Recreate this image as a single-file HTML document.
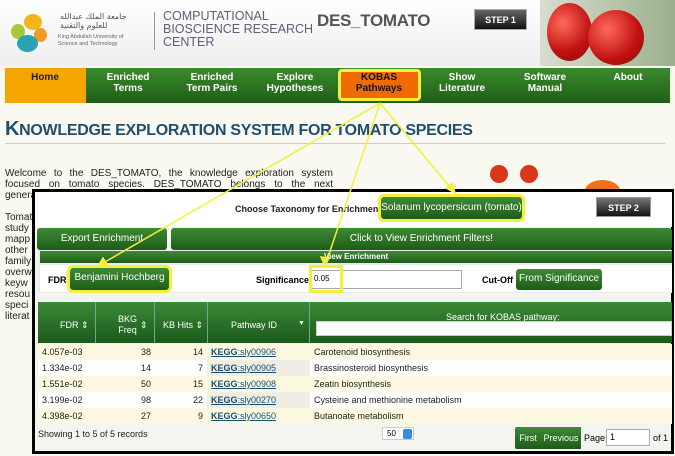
<!DOCTYPE html>
<html><head><meta charset="utf-8"><style>
*{box-sizing:border-box;margin:0;padding:0}
body{width:675px;height:456px;overflow:hidden;background:#f9f9f1;font-family:"Liberation Sans",Arial,sans-serif;position:relative}
.a{position:absolute}
.nav{left:5px;top:68px;width:665px;height:35px;background:linear-gradient(#3b8a2c,#1f5e17)}
.ni{position:absolute;top:4px;color:#fff;font-weight:bold;font-size:10px;text-align:center;line-height:11px;width:80px}
.g{background:linear-gradient(#3f8a35,#1d5c18);color:#fff;border-radius:3px;font-size:10px;text-align:center}
.tb td{font-size:9px;height:16px;padding:0 4px;color:#222}
.y{outline:3px solid #f2f03a}
</style></head><body>
<div class="a" style="left:0;top:0;width:675px;height:66px;background:linear-gradient(#fff,#eeeeee)"></div>
<div class="a" style="left:24px;top:14px;width:18px;height:16px;border-radius:50%;background:#f2b51c"></div>
<div class="a" style="left:11px;top:24px;width:14px;height:15px;border-radius:50%;background:#a8c73a"></div>
<div class="a" style="left:34px;top:28px;width:13px;height:14px;border-radius:50%;background:#f39a27"></div>
<div class="a" style="left:17px;top:35px;width:21px;height:17px;border-radius:50%;background:#2aa4b5"></div>
<div class="a" style="left:60px;top:12px;font-size:8px;color:#555;font-family:'DejaVu Sans',sans-serif;line-height:9px">جامعة الملك عبدالله<br>للعلوم والتقنية</div>
<div class="a" style="left:58px;top:34px;font-size:5.5px;color:#666;line-height:7px">King Abdullah University of<br>Science and Technology</div>
<div class="a" style="left:154px;top:12px;width:1px;height:38px;background:#999"></div>
<div class="a" style="left:163px;top:10px;font-size:12.5px;color:#5c6078;line-height:13px">COMPUTATIONAL<br>BIOSCIENCE RESEARCH<br>CENTER</div>
<div class="a" style="left:317px;top:11px;font-size:17px;font-weight:bold;color:#555;letter-spacing:-0.3px">DES_TOMATO</div>
<div class="a" style="left:474px;top:9px;width:53px;height:21px;background:linear-gradient(#666,#111);color:#fff;font-size:9px;font-weight:bold;text-align:center;line-height:21px;border:1px solid #aaa">STEP 1</div>
<div class="a" style="left:540px;top:0;width:135px;height:66px;background:linear-gradient(90deg,#d9ddd0,#9bb08c)"></div>
<div class="a" style="left:547px;top:3px;width:45px;height:58px;border-radius:50%;background:radial-gradient(circle at 35% 35%,#ff6a5a,#c01010 60%,#801010)"></div>
<div class="a" style="left:588px;top:10px;width:56px;height:55px;border-radius:50%;background:radial-gradient(circle at 35% 35%,#ff6a5a,#c01010 60%,#801010)"></div>
<div class="a nav">
<div class="a" style="left:0;top:0;width:81px;height:35px;background:#f6a400"></div>
<div class="ni" style="left:0;color:#222">Home</div>
<div class="ni" style="left:83px">Enriched<br>Terms</div>
<div class="ni" style="left:167px">Enriched<br>Term Pairs</div>
<div class="ni" style="left:250px">Explore<br>Hypotheses</div>
<div class="a" style="left:333px;top:1px;width:83px;height:32px;background:#f06a00;border:3px solid #f2f03a;border-radius:4px"></div>
<div class="ni" style="left:334px;color:#111">KOBAS<br>Pathways</div>
<div class="ni" style="left:417px">Show<br>Literature</div>
<div class="ni" style="left:500px">Software<br>Manual</div>
<div class="ni" style="left:583px">About</div>
</div>
<div class="a" style="left:5px;top:118px;font-size:20px;font-weight:bold;color:#1f4e6e;letter-spacing:-0.3px">K<span style="font-size:16px">NOWLEDGE EXPLORATION SYSTEM FOR TOMATO SPECIES</span></div>
<div class="a" style="left:5px;top:143px;width:660px;height:1px;background:#ccc"></div>
<div class="a" style="left:5px;top:168px;width:328px;font-size:10px;line-height:11px;color:#222;text-align:justify">Welcome to the DES_TOMATO, the knowledge exploration system focused on tomato species. DES_TOMATO belongs to the next generation<br><br>Tomato<br>study<br>mapp<br>other<br>family<br>overw<br>keyw<br>resou<br>speci<br>literat</div>
<div class="a" style="left:490px;top:165px;width:18px;height:18px;border-radius:50%;background:#d83818"></div>
<div class="a" style="left:520px;top:165px;width:18px;height:18px;border-radius:50%;background:#d83818"></div>
<div class="a" style="left:585px;top:180px;width:35px;height:22px;border-radius:50%;background:#f07020"></div>
<div class="a" style="left:32px;top:189px;width:642px;height:265px;border:3px solid #000;background:#f4f4f0"></div>
<div class="a" style="left:35px;top:192px;width:637px;height:35px;background:#fff"></div>
<div class="a" style="left:235px;top:204px;font-size:9px;font-weight:bold;color:#222">Choose Taxonomy for Enrichment:</div>
<div class="a g y" style="left:381px;top:197px;width:141px;height:22px;line-height:22px">Solanum lycopersicum (tomato)</div>
<div class="a" style="left:596px;top:197px;width:55px;height:20px;background:linear-gradient(#777,#111);color:#fff;font-size:9px;font-weight:bold;text-align:center;line-height:20px;border:1px solid #999">STEP 2</div>
<div class="a g" style="left:37px;top:228px;width:130px;height:22px;line-height:22px">Export Enrichment</div>
<div class="a g" style="left:171px;top:228px;width:501px;height:22px;line-height:22px">Click to View Enrichment Filters!</div>
<div class="a" style="left:38px;top:250px;width:634px;height:43px;background:#e8ecf0"></div>
<div class="a" style="left:40px;top:251px;width:632px;height:12px;background:linear-gradient(#3f8a35,#1d5c18);color:#fff;font-size:8px;font-weight:bold;text-align:center;line-height:12px">View Enrichment</div>
<div class="a" style="left:40px;top:265px;width:632px;height:27px;background:#fff"></div>
<div class="a" style="left:48px;top:275px;font-size:9px;font-weight:bold">FDR</div>
<div class="a g y" style="left:70px;top:268px;width:99px;height:22px;line-height:20px">Benjamini Hochberg</div>
<div class="a" style="left:256px;top:275px;font-size:9px;font-weight:bold">Significance</div>
<div class="a" style="left:310px;top:270px;width:152px;height:19px;border:1px solid #aaa;background:#fff"></div>
<div class="a y" style="left:312px;top:268px;width:28px;height:22px;font-size:8px;line-height:22px;padding-left:2px">0.05</div>
<div class="a" style="left:482px;top:275px;font-size:9px;font-weight:bold">Cut-Off</div>
<div class="a g" style="left:516px;top:269px;width:86px;height:21px;line-height:20px">From Significance</div>
<div class="a" style="left:38px;top:302px;width:634px;height:41px;background:linear-gradient(#3d8a37,#1a5a1a)"></div>
<div class="a" style="left:38px;top:302px;width:634px;height:41px;color:#fff;font-size:9px">
<span class="a" style="left:22px;top:18px">FDR ⇕</span>
<span class="a" style="left:57px;width:60px;height:41px;border-left:1px solid #6a9;border-right:1px solid #6a9;top:0"></span>
<span class="a" style="left:80px;top:12px;text-align:center;line-height:11px">BKG<br>Freq</span><span class="a" style="left:102px;top:18px">⇕</span>
<span class="a" style="left:125px;top:18px">KB Hits ⇕</span>
<span class="a" style="left:169px;width:103px;height:41px;border-left:1px solid #6a9;border-right:1px solid #6a9;top:0"></span>
<span class="a" style="left:193px;top:18px">Pathway ID</span><span class="a" style="left:260px;top:18px;font-size:7px">▼</span>
<span class="a" style="left:408px;top:10px">Search for KOBAS pathway:</span>
</div>
<div class="a" style="left:316px;top:321px;width:356px;height:15px;background:#fff;border:1px solid #ccc"></div>
<table class="a tb" style="left:38px;top:344px;width:634px;border-collapse:collapse">
<tr style="background:#fbf9e0"><td style="width:57px">4.057e-03</td><td style="width:60px;text-align:right">38</td><td style="width:52px;text-align:right">14</td><td style="width:103px"><u style="color:#1e4e6e;font-weight:bold">KEGG</u><u style="color:#1e4e6e">:sly00906</u></td><td>Carotenoid biosynthesis</td></tr>
<tr style="background:#fff"><td>1.334e-02</td><td style="text-align:right">14</td><td style="text-align:right">7</td><td style="background:#eeeee4"><u style="color:#1e4e6e;font-weight:bold">KEGG</u><u style="color:#1e4e6e">:sly00905</u></td><td>Brassinosteroid biosynthesis</td></tr>
<tr style="background:#fbf9e0"><td>1.551e-02</td><td style="text-align:right">50</td><td style="text-align:right">15</td><td><u style="color:#1e4e6e;font-weight:bold">KEGG</u><u style="color:#1e4e6e">:sly00908</u></td><td>Zeatin biosynthesis</td></tr>
<tr style="background:#fff"><td>3.199e-02</td><td style="text-align:right">98</td><td style="text-align:right">22</td><td style="background:#eeeee4"><u style="color:#1e4e6e;font-weight:bold">KEGG</u><u style="color:#1e4e6e">:sly00270</u></td><td>Cysteine and methionine metabolism</td></tr>
<tr style="background:#fbf9e0"><td>4.398e-02</td><td style="text-align:right">27</td><td style="text-align:right">9</td><td><u style="color:#1e4e6e;font-weight:bold">KEGG</u><u style="color:#1e4e6e">:sly00650</u></td><td>Butanoate metabolism</td></tr>
</table>
<div class="a" style="left:38px;top:429px;font-size:9px;color:#222">Showing 1 to 5 of 5 records</div>
<div class="a" style="left:382px;top:427px;width:32px;height:13px;background:#fff;border:1px solid #ccc;font-size:8px;padding-left:4px;line-height:12px">50<span class="a" style="right:1px;top:1px;width:9px;height:10px;background:#3a8ae0;border-radius:2px"></span></div>
<div class="a g" style="left:515px;top:427px;width:26px;height:22px;line-height:22px;font-size:9px;border-radius:2px 0 0 2px">First</div>
<div class="a g" style="left:541px;top:427px;width:40px;height:22px;line-height:22px;font-size:9px;border-radius:0">Previous</div>
<div class="a" style="left:584px;top:433px;font-size:9px">Page</div>
<div class="a" style="left:606px;top:429px;width:44px;height:17px;background:#fff;border:1px solid #aaa;font-size:9px;padding-left:3px;line-height:15px">1</div>
<div class="a" style="left:653px;top:433px;font-size:9px">of 1</div>
<svg class="a" style="left:0;top:0" width="675" height="456">
<g stroke="#f2f03a" stroke-width="1.5" fill="#f2f03a">
<line x1="380" y1="103" x2="98" y2="266"/>
<line x1="380" y1="103" x2="325" y2="266"/>
<line x1="380" y1="103" x2="455" y2="193"/>
<polygon points="98,266 103,258 107,264"/>
<polygon points="325,266 321,257 329,258"/>
<polygon points="455,193 446,188 452,183"/>
</g></svg>
</body></html>
